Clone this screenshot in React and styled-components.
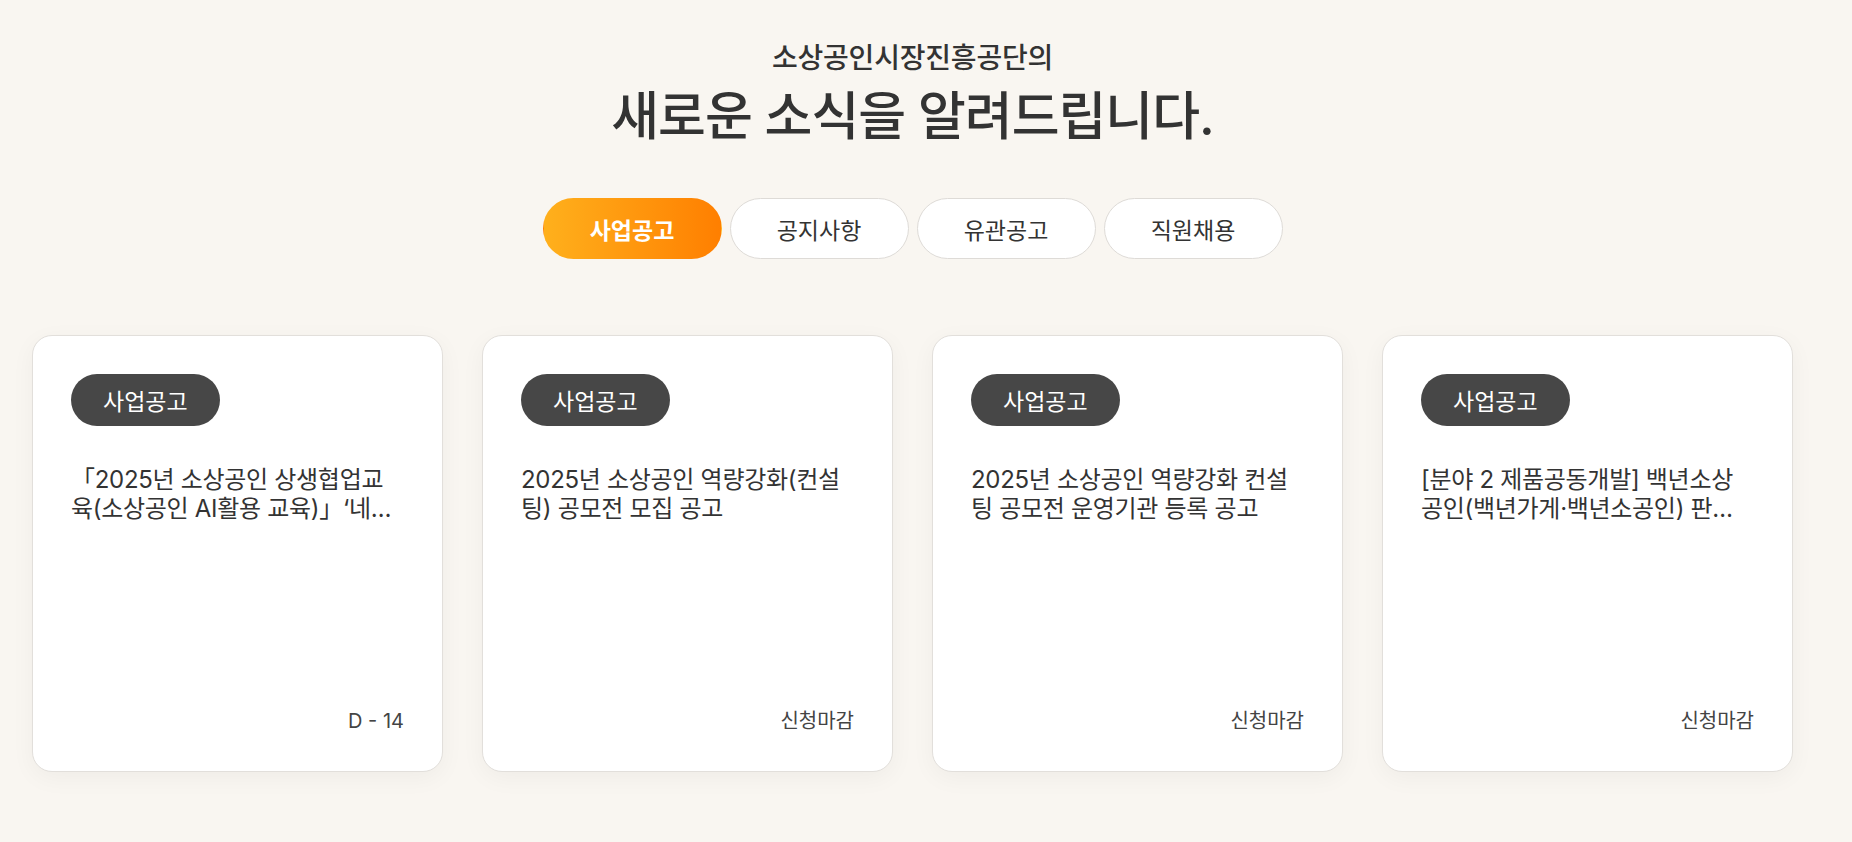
import React, { useState } from "react";
import styled, { createGlobalStyle } from "styled-components";

const GlobalStyle = createGlobalStyle`
  html, body {
    margin: 0;
    padding: 0;
    background: #f9f6f1;
  }
  body {
    font-family: Inter, "Noto Sans CJK KR", sans-serif;
    color: #333;
  }
  * { box-sizing: border-box; }
`;

const Page = styled.main`
  width: 1825px;
  min-height: 842px;
  padding-top: 40px;
  display: flex;
  flex-direction: column;
  align-items: center;
`;

const Header = styled.header`
  display: flex;
  flex-direction: column;
  align-items: center;
`;

const SubTitle = styled.p`
  margin: 0;
  font-size: 28px;
  line-height: 36px;
  font-weight: 500;
  letter-spacing: -0.2px;
  color: #333;
`;

const Title = styled.h2`
  margin: 10px 0 0;
  font-size: 52px;
  line-height: 62px;
  font-weight: 500;
  letter-spacing: -1px;
  color: #333;
`;

const Tabs = styled.nav`
  margin-top: 50px;
  display: flex;
  gap: 8px;
`;

const Tab = styled.button`
  width: 179px;
  height: 61px;
  border-radius: 31px;
  border: 1px solid ${(p) => (p.$active ? "transparent" : "#dedbd7")};
  background: ${(p) =>
    p.$active ? "linear-gradient(90deg, #ffb01c 0%, #ff7f00 100%)" : "#fff"};
  color: ${(p) => (p.$active ? "#fff" : "#333")};
  font-family: inherit;
  font-size: 23px;
  font-weight: ${(p) => (p.$active ? 700 : 400)};
  letter-spacing: 0;
  cursor: pointer;
  padding: 0;
`;

const CardRow = styled.section`
  margin-top: 76px;
  display: grid;
  grid-template-columns: repeat(4, 411px);
  gap: 39px;
`;

const Card = styled.article`
  height: 437px;
  background: #fff;
  border: 1px solid #e2dfdb;
  border-radius: 20px;
  box-shadow: 0 6px 24px rgba(0, 0, 0, 0.045);
  padding: 38px;
  display: flex;
  flex-direction: column;
  align-items: flex-start;
`;

const Badge = styled.span`
  display: inline-flex;
  align-items: center;
  justify-content: center;
  height: 52px;
  padding: 0 32px;
  border-radius: 26px;
  background: #474747;
  color: #fff;
  font-size: 23px;
  font-weight: 400;
  letter-spacing: 0;
`;

const CardTitle = styled.h3`
  margin: 40px 0 0;
  font-size: 24px;
  line-height: 28.5px;
  font-weight: 400;
  letter-spacing: -0.3px;
  color: #333;
  display: -webkit-box;
  -webkit-line-clamp: 2;
  -webkit-box-orient: vertical;
  overflow: hidden;
`;

const CardFooter = styled.div`
  margin-top: auto;
  align-self: stretch;
  text-align: right;
  font-size: 20px;
  line-height: 24px;
  color: #444;
  letter-spacing: 0;
`;

const tabs = ["사업공고", "공지사항", "유관공고", "직원채용"];

const cards = [
  {
    badge: "사업공고",
    title: "「2025년 소상공인 상생협업교육(소상공인 AI활용 교육)」‘네이버 스마트스토어’ 교육생 모집 공고",
    footer: "D - 14",
  },
  {
    badge: "사업공고",
    title: "2025년 소상공인 역량강화(컨설팅) 공모전 모집 공고",
    footer: "신청마감",
  },
  {
    badge: "사업공고",
    title: "2025년 소상공인 역량강화 컨설팅 공모전 운영기관 등록 공고",
    footer: "신청마감",
  },
  {
    badge: "사업공고",
    title: "[분야 2 제품공동개발] 백년소상공인(백년가게·백년소공인) 판로 지원사업 참여기업 모집 공고",
    footer: "신청마감",
  },
];

export default function App() {
  const [active, setActive] = useState(0);
  return (
    <>
      <GlobalStyle />
      <Page>
        <Header>
          <SubTitle>소상공인시장진흥공단의</SubTitle>
          <Title>새로운 소식을 알려드립니다.</Title>
        </Header>
        <Tabs>
          {tabs.map((t, i) => (
            <Tab key={t} $active={i === active} onClick={() => setActive(i)}>
              {t}
            </Tab>
          ))}
        </Tabs>
        <CardRow>
          {cards.map((c, i) => (
            <Card key={i}>
              <Badge>{c.badge}</Badge>
              <CardTitle>{c.title}</CardTitle>
              <CardFooter>{c.footer}</CardFooter>
            </Card>
          ))}
        </CardRow>
      </Page>
    </>
  );
}
